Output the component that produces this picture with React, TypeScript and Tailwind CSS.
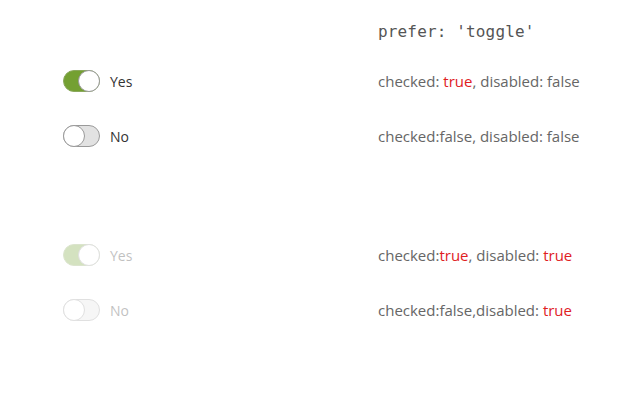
import React from "react";

function Toggle({ checked, disabled }: { checked: boolean; disabled?: boolean }) {
    return (
        <div className={`flex items-center ${disabled ? "opacity-30" : ""}`}>
            <div
                className={`flex h-[22px] w-[37px] rounded-full border ${
                    checked ? "justify-end border-[#8aa85c] bg-[#74a032]" : "justify-start border-[#9a9a9a] bg-[#e2e2e2]"
                }`}
            >
                <div className="-m-px h-[22px] w-[22px] shrink-0 rounded-full border border-[#9a9a9a] bg-white" />
            </div>
            <span className="ml-[10px] text-[14px] text-[#333]">{checked ? "Yes" : "No"}</span>
        </div>
    );
}

const T = ({ children }: { children: React.ReactNode }) => <span className="text-[#e0201f]">{children}</span>;

function Row({ left, right, className }: { left: React.ReactNode; right: React.ReactNode; className: string }) {
    return (
        <div className={`flex h-[22px] items-center ${className}`}>
            <div className="w-[378px] shrink-0 pl-[63px]">{left}</div>
            <div className="text-[15px] text-[#666]">{right}</div>
        </div>
    );
}

export default function App() {
    return (
        <div className="h-[400px] w-[640px] overflow-hidden bg-white font-['Open_Sans',sans-serif]">
            <Row
                className="mt-[21px]"
                left={null}
                right={
                    <span className="font-['DejaVu_Sans_Mono',monospace] text-[16px] tracking-[0.15px] text-[#555]">
                        prefer: 'toggle'
                    </span>
                }
            />
            <Row
                className="mt-[27px]"
                left={<Toggle checked />}
                right={<>checked: <T>true</T>, disabled: false</>}
            />
            <Row
                className="mt-[33px]"
                left={<Toggle checked={false} />}
                right={<>checked:false, disabled: false</>}
            />
            <Row
                className="mt-[97px]"
                left={<Toggle checked disabled />}
                right={<>checked:<T>true</T>, disabled: <T>true</T></>}
            />
            <Row
                className="mt-[33px]"
                left={<Toggle checked={false} disabled />}
                right={<>checked:false,disabled: <T>true</T></>}
            />
        </div>
    );
}
